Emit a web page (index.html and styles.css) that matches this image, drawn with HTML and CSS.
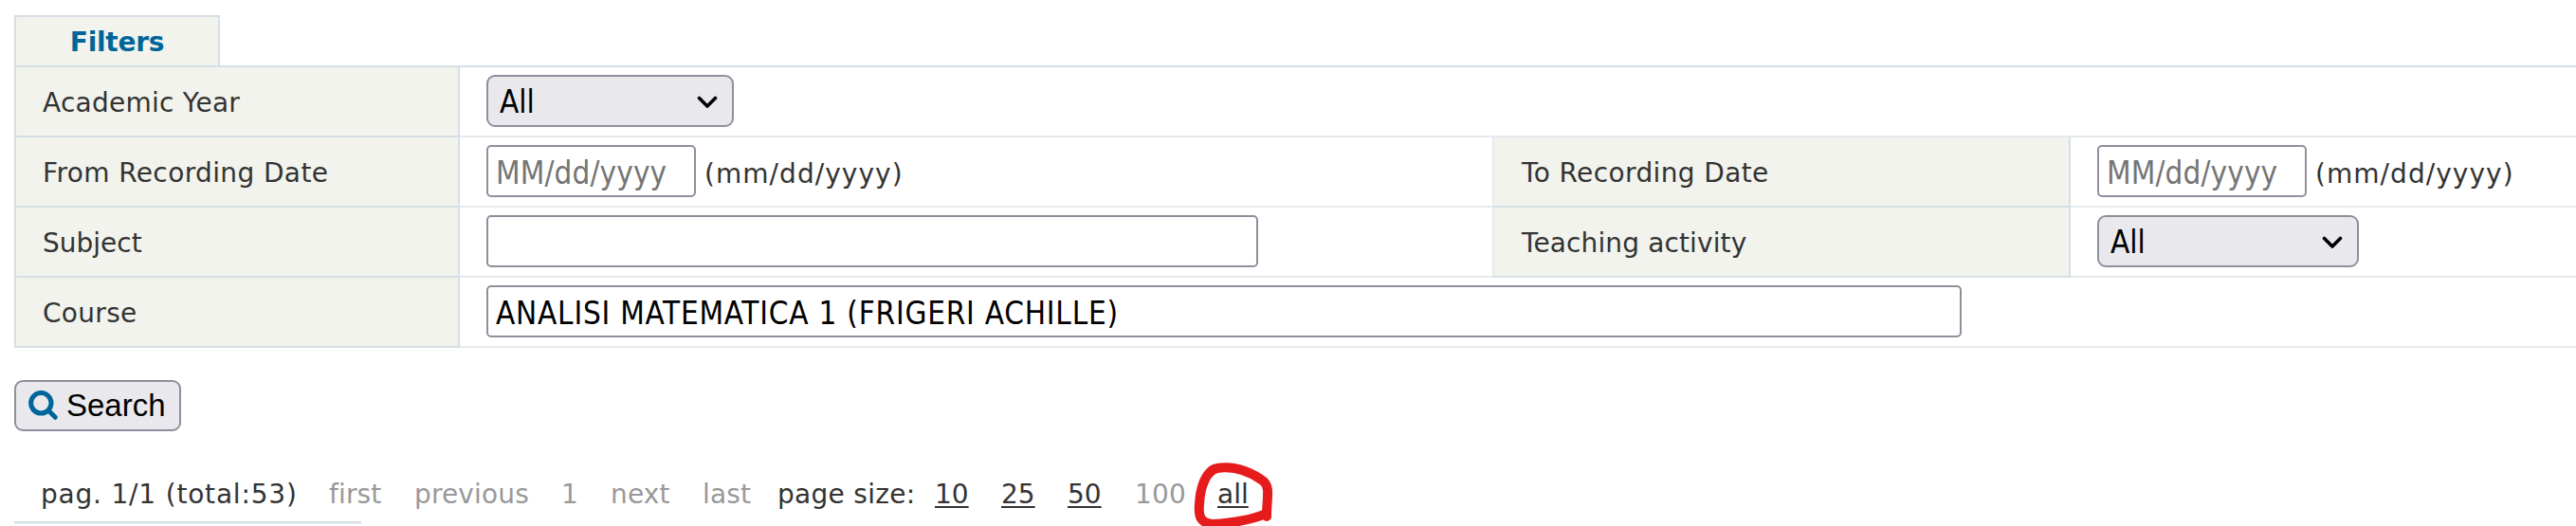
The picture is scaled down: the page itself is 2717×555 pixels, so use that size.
FILE: index.html
```html
<!DOCTYPE html>
<html lang="en">
<head>
<meta charset="utf-8">
<title>Filters</title>
<link rel="stylesheet" href="styles.css">
</head>
<body>
<main class="page">
  <div class="tab"><span class="tab-text">Filters</span></div>
  <section class="filters">
    <div class="row">
      <div class="label"><span class="t-year">Academic Year</span></div>
      <div class="field"><div class="select year"><span>All</span><svg class="chevron" viewBox="0 0 22 14"><path d="M2.5 2.5 L11 11 L19.5 2.5"/></svg></div></div>
    </div>
    <div class="row split">
      <div class="label"><span class="t-date">From Recording Date</span></div>
      <div class="field"><div class="input date"><span class="placeholder">MM/dd/yyyy</span></div><span class="hint">(mm/dd/yyyy)</span></div>
      <div class="label second"><span class="t-date">To Recording Date</span></div>
      <div class="field"><div class="input date"><span class="placeholder">MM/dd/yyyy</span></div><span class="hint">(mm/dd/yyyy)</span></div>
    </div>
    <div class="row split">
      <div class="label"><span class="t-subject">Subject</span></div>
      <div class="field"><div class="input subject"></div></div>
      <div class="label second"><span class="t-teach">Teaching activity</span></div>
      <div class="field"><div class="select activity"><span>All</span><svg class="chevron" viewBox="0 0 22 14"><path d="M2.5 2.5 L11 11 L19.5 2.5"/></svg></div></div>
    </div>
    <div class="row">
      <div class="label"><span class="t-course">Course</span></div>
      <div class="field"><div class="input course"><span class="value">ANALISI MATEMATICA 1 (FRIGERI ACHILLE)</span></div></div>
    </div>
  </section>
  <button class="search" type="button">
    <svg class="search-icon" viewBox="0 0 32 32"><circle cx="13.3" cy="13.3" r="10.7"/><path d="M21.5 21.5 L28.3 28.3"/></svg>
    <span>Search</span>
  </button>
  <nav class="pager">
    <span class="total">pag. 1/1 (total:53)</span>
    <span class="off">first</span>
    <span class="off">previous</span>
    <span class="off">1</span>
    <span class="off">next</span>
    <span class="off">last</span>
    <span class="size">page size:</span>
    <a class="link">10</a>
    <a class="link">25</a>
    <a class="link">50</a>
    <span class="off">100</span>
    <span class="marked"><a class="link">all</a><svg class="ring" viewBox="0 0 88 70"><path d="M78 55 C60 63 38 65 22 66 C8 65 7 56 8 45 C9 25 16 9 27 7 C47 4 65 13 76 21 C83 28 79 38 79 58"/></svg></span>
  </nav>
  <div class="rule"></div>
</main>
</body>
</html>
```
FILE: styles.css
```css
* { box-sizing: border-box; }
body {
  margin: 0;
  background: #fff;
  color: #333;
  font-family: "DejaVu Sans", sans-serif;
  font-size: 28px;
  line-height: 34px;
  white-space: nowrap;
  overflow: hidden;
}
.page { padding: 16px 0 0 15px; height: 555px; overflow: hidden; }
.tab {
  width: 217px;
  height: 53px;
  border: 2px solid #d5dfe5;
  border-bottom: 0;
  background: #f2f3ec;
  color: #069;
  font-weight: bold;
  text-align: center;
  padding-top: 10px;
}
.tab-text { letter-spacing: -0.25px; }
.filters { border-top: 2px solid #d5dfe5; }
.row { display: grid; grid-template-columns: 470px 1fr; height: 74px; }
.row.split { grid-template-columns: 470px 1089px 610px 1fr; }
.label {
  display: flex;
  align-items: center;
  background: #f2f3ec;
  border: 2px solid #d5dfe5;
  border-top: 0;
  padding: 3px 0 0 28px;
}
.label.second { border-left-color: #e4eaee; padding-left: 29px; }
.t-year { letter-spacing: 0.25px; }
.t-date { letter-spacing: 0.38px; }
.t-teach { letter-spacing: 0.12px; }
.t-course { letter-spacing: 0.3px; }
.field {
  display: flex;
  align-items: center;
  padding: 0 0 1px 28px;
  border-bottom: 2px solid #e4eaee;
}
.input, .select {
  display: flex;
  align-items: center;
  height: 55px;
  border: 2px solid #8f8f9d;
  border-radius: 5px;
  background: #fff;
  color: #000;
  font-family: "DejaVu Sans Condensed", "DejaVu Sans", sans-serif;
  font-stretch: condensed;
  font-size: 33px;
  padding: 4px 8px 0;
}
.select {
  justify-content: space-between;
  background: #e9e9ed;
  border-radius: 9px;
  padding: 3px 15px 0 12px;
}
.chevron { width: 22px; height: 14px; }
.chevron path { fill: none; stroke: #000; stroke-width: 3.6; stroke-linecap: round; stroke-linejoin: round; }
.year { width: 261px; }
.activity { width: 276px; }
.date { width: 221px; }
.subject { width: 814px; }
.course { width: 1556px; }
.placeholder { color: #757575; letter-spacing: 0.1px; }
.value { letter-spacing: 0.76px; }
.hint { margin-left: 9px; padding-top: 6px; letter-spacing: 1.05px; }
.search {
  display: flex;
  align-items: center;
  width: 176px;
  height: 54px;
  margin-top: 34px;
  border: 2px solid #8f8f9d;
  border-radius: 9px;
  background: #e9e9ed;
  color: #000;
  padding: 0 0 0 13px;
  font-family: "Liberation Sans", Arial, sans-serif;
  font-size: 33px;
}
.search-icon { width: 32px; height: 32px; margin-right: 8px; }
.search-icon circle, .search-icon path { fill: none; stroke: #069; stroke-width: 5; stroke-linecap: round; }
.pager {
  display: grid;
  grid-template-columns: 304px 90px 155px 52px 97px 79px 166px 70px 70px 71px 87px 50px;
  height: 47px;
  margin-top: 48px;
  padding: 2px 0 0 28px;
}
.total { letter-spacing: 0.8px; }
.size { letter-spacing: 0.3px; }
.off { color: #999; letter-spacing: 0.15px; }
.link { text-decoration: underline; text-decoration-thickness: 2px; text-underline-offset: 3px; text-decoration-skip-ink: none; }
.marked { position: relative; }
.ring { position: absolute; left: -27px; top: -18px; width: 88px; height: 70px; }
.ring path { fill: none; stroke: #e61c1c; stroke-width: 10; stroke-linecap: round; stroke-linejoin: round; }
.rule { width: 366px; height: 3px; background: #d5dfe5; border-bottom: 1px solid #e9eff1; }
```
